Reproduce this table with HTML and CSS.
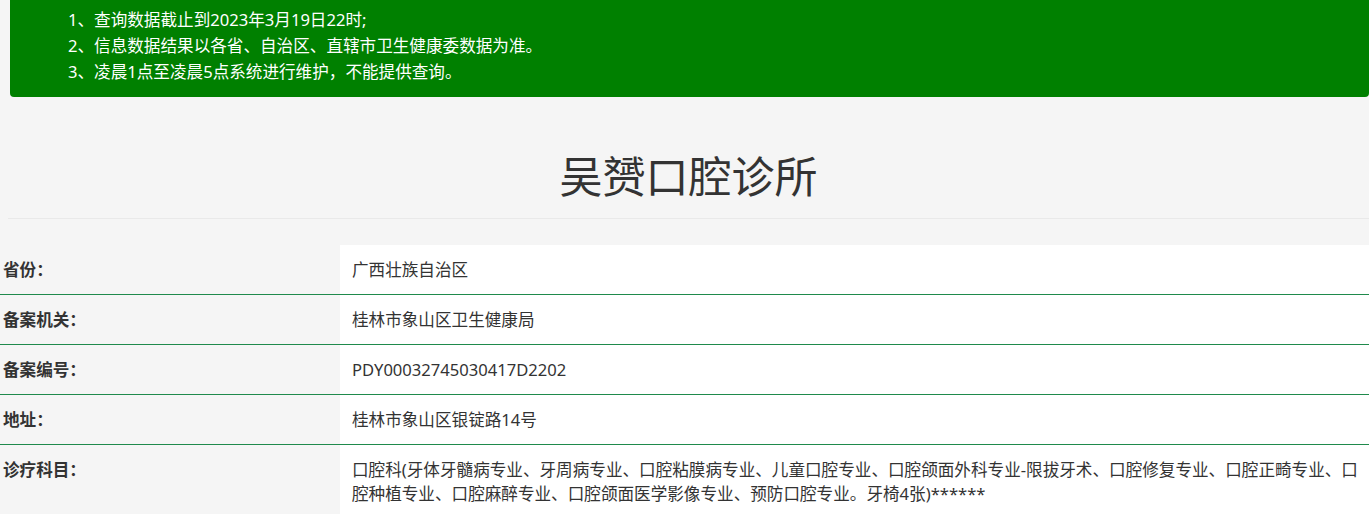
FILE: index.html
```html
<!DOCTYPE html>
<html lang="zh-CN">
<head>
<meta charset="utf-8">
<title>吴赟口腔诊所</title>
<link rel="stylesheet" href="styles.css">
</head>
<body>
  <div class="notice">
    <p>1、查询数据截止到2023年3月19日22时;</p>
    <p>2、信息数据结果以各省、自治区、直辖市卫生健康委数据为准。</p>
    <p>3、凌晨1点至凌晨5点系统进行维护，不能提供查询。</p>
  </div>
  <div class="heading">
    <h1 class="title">吴赟口腔诊所</h1>
  </div>
  <table class="info">
    <tr>
      <th>省份：</th>
      <td>广西壮族自治区</td>
    </tr>
    <tr>
      <th>备案机关：</th>
      <td>桂林市象山区卫生健康局</td>
    </tr>
    <tr>
      <th>备案编号：</th>
      <td>PDY00032745030417D2202</td>
    </tr>
    <tr>
      <th>地址：</th>
      <td>桂林市象山区银锭路14号</td>
    </tr>
    <tr>
      <th>诊疗科目：</th>
      <td>口腔科(牙体牙髓病专业、牙周病专业、口腔粘膜病专业、儿童口腔专业、口腔颌面外科专业-限拔牙术、口腔修复专业、口腔正畸专业、口腔种植专业、口腔麻醉专业、口腔颌面医学影像专业、预防口腔专业。牙椅4张)******</td>
    </tr>
  </table>
</body>
</html>
```

FILE: styles.css
```css
html, body {
  overflow: hidden;
}
body {
  margin: 0;
  background: #f5f5f5;
  color: #333;
  font-family: "Noto Sans", "Noto Sans CJK SC", sans-serif;
  font-size: 16.6px;
}
.notice {
  margin-left: 10px;
  background: #008000;
  color: #fff;
  border-radius: 0 0 4px 4px;
  padding: 7px 0 12px 58px;
  height: 78px;
}
.notice p {
  margin: 0;
  line-height: 26px;
}
.heading {
  margin: 0 0 0 8px;
  padding-top: 50px;
  border-bottom: 1px solid #e9e9e9;
  height: 71px;
}
.title {
  margin: 0;
  text-align: center;
  font-size: 43px;
  font-weight: normal;
  line-height: 60px;
  color: #333;
}
.info {
  margin-top: 26px;
  width: 100%;
  border-collapse: collapse;
  table-layout: fixed;
}
.info th,
.info td {
  border-bottom: 1px solid #1f8a4c;
  line-height: 24px;
  padding: 13px 0 12px 12px;
  vertical-align: top;
  text-align: left;
}
.info th {
  width: 337px;
  padding-left: 3px;
  font-weight: bold;
  background: #f5f5f5;
}
.info td {
  background: #fff;
  font-weight: normal;
}
```
